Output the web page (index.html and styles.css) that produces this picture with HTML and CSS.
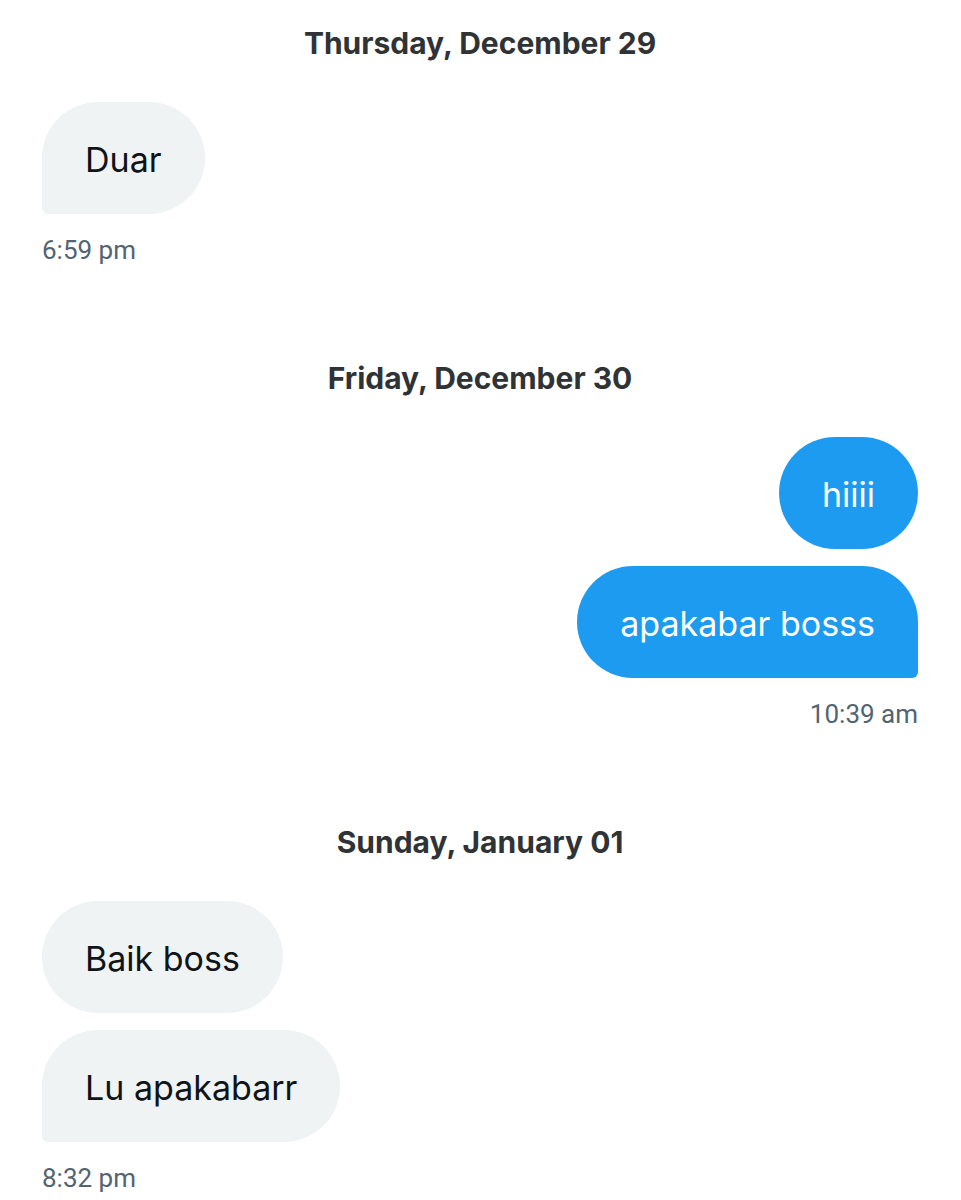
FILE: index.html
```html
<!DOCTYPE html>
<html lang="en">
<head>
    <meta charset="UTF-8">
    <meta name="viewport" content="width=device-width, initial-scale=1.0">
    <title>Messages</title>
    <link rel="stylesheet" href="styles.css">
</head>
<body>
    <div class="conversation">
        <section class="day">
            <h2 class="day-label">Thursday, December 29</h2>
            <div class="group received">
                <div class="bubble last">Duar</div>
                <span class="time">6:59 pm</span>
            </div>
        </section>

        <section class="day">
            <h2 class="day-label">Friday, December 30</h2>
            <div class="group sent">
                <div class="bubble">hiiii</div>
                <div class="bubble last">apakabar bosss</div>
                <span class="time">10:39 am</span>
            </div>
        </section>

        <section class="day">
            <h2 class="day-label">Sunday, January 01</h2>
            <div class="group received">
                <div class="bubble">Baik boss</div>
                <div class="bubble last">Lu apakabarr</div>
                <span class="time">8:32 pm</span>
            </div>
        </section>
    </div>
</body>
</html>
```

FILE: styles.css
```css
body {
    margin: 0;
    padding: 0;
    background-color: #ffffff;
    font-family: Inter, "Noto Sans", sans-serif;
    color: #0f1419;
}

.conversation {
    padding: 23px 43px 0 42px;
    display: flex;
    flex-direction: column;
    gap: 92px;
}

.day {
    display: flex;
    flex-direction: column;
}

.day-label {
    margin: 0 0 39px;
    text-align: center;
    font-size: 30px;
    line-height: 40px;
    font-weight: 700;
    color: #2f3336;
}

.group {
    display: flex;
    flex-direction: column;
    gap: 17px;
}

.group.received {
    align-items: flex-start;
}

.group.sent {
    align-items: flex-end;
}

.bubble {
    padding: 38px 43px 34px;
    font-size: 34px;
    line-height: 40px;
    border-radius: 56px;
}

.received .bubble {
    background-color: #eff3f4;
    color: #0f1419;
}

.sent .bubble {
    background-color: #1d9bf0;
    color: #ffffff;
}

.received .bubble.last {
    border-bottom-left-radius: 6px;
}

.sent .bubble.last {
    border-bottom-right-radius: 6px;
}

.time {
    margin-top: 3px;
    font-family: Roboto, "Liberation Sans", sans-serif;
    font-size: 26px;
    line-height: 32px;
    color: #536471;
}
```
